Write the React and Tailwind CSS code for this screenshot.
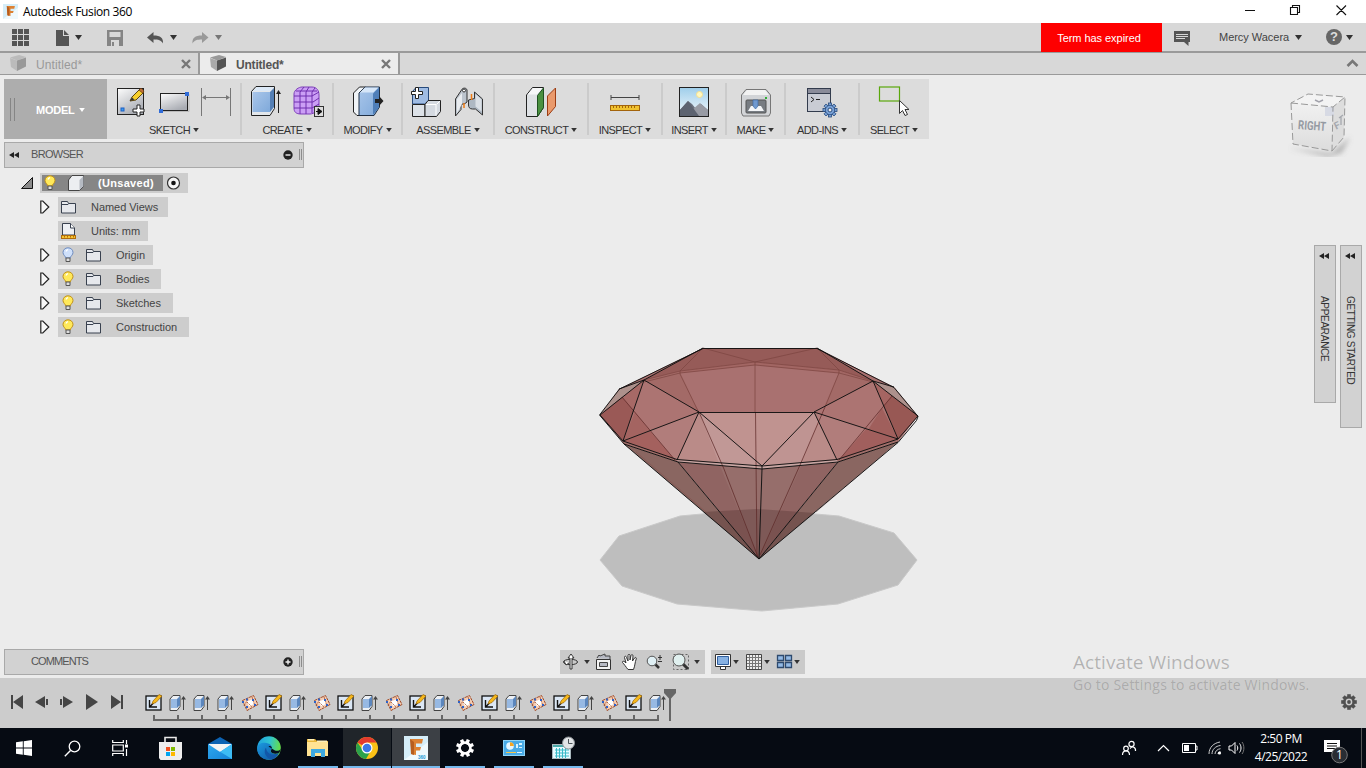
import React from "react";

const Svg = ({ w, h = w, vb, className = "", children }) => (
  <svg width={w} height={h} viewBox={vb || `0 0 ${w} ${h}`} fill="none" className={`block shrink-0 ${className}`}>
    {children}
  </svg>
);

const Caret = ({ className = "text-[#333]", small }) => (
  <Svg w={small ? 6 : 7} h={small ? 4 : 5} vb="0 0 7 5" className={className}>
    <path d="M0 0h7L3.5 5z" fill="currentColor" />
  </Svg>
);

const Defs = () => (
  <svg width="0" height="0" className="absolute">
    <defs>
      <linearGradient id="steel" x1="0" y1="0" x2="0.6" y2="1">
        <stop offset="0" stopColor="#fdfdfd" />
        <stop offset="1" stopColor="#a9acb3" />
      </linearGradient>
      <linearGradient id="blue" x1="0" y1="0" x2="1" y2="1">
        <stop offset="0" stopColor="#a9c6ea" />
        <stop offset="1" stopColor="#7fa9da" />
      </linearGradient>
      <linearGradient id="sky" x1="0" y1="0" x2="0" y2="1">
        <stop offset="0" stopColor="#9dcdea" />
        <stop offset="1" stopColor="#f4f9fc" />
      </linearGradient>
      <linearGradient id="mail" x1="0" y1="0" x2="1" y2="1">
        <stop offset="0" stopColor="#2fa8ee" />
        <stop offset="1" stopColor="#1583d8" />
      </linearGradient>
      <linearGradient id="edge" x1="0" y1="0" x2="1" y2="0.2">
        <stop offset="0" stopColor="#1e9fe0" />
        <stop offset="0.55" stopColor="#2fc3d2" />
        <stop offset="1" stopColor="#63dc4e" />
      </linearGradient>
      <linearGradient id="edgelow" x1="0" y1="0" x2="1" y2="1">
        <stop offset="0" stopColor="#1b9be0" />
        <stop offset="1" stopColor="#0f4f9e" />
      </linearGradient>
      <linearGradient id="cubeface" x1="0" y1="0" x2="0" y2="1">
        <stop offset="0" stopColor="#f1f1f1" />
        <stop offset="1" stopColor="#dcdcdc" />
      </linearGradient>
      <filter id="soft" x="-30%" y="-80%" width="160%" height="260%">
        <feGaussianBlur stdDeviation="2.5" />
      </filter>
    </defs>
  </svg>
);

/* ---------- toolbar icons ---------- */
const SketchIcon = () => (
  <Svg w={32}>
    <rect x="1.500" y="2.500" width="26" height="26" fill="url(#steel)" stroke="#222" />
    <rect x="5" y="22" width="3" height="3" fill="#3b9bf0" stroke="#1c5fc4" />
    <path d="M14 15l2-4L24 3l4 3-8 8z" fill="#f7cf2c" stroke="#5b4410" />
    <path d="M23 4l2-2 3 3-1.500 2z" fill="#c0703a" stroke="#5b3410" strokeWidth=".7" />
    <path d="M14 15l2-3.500 2.500 2z" fill="#333" />
    <path d="M21 19h3v4h4v3h-4v4h-3v-4h-4v-3h4z" fill="#fff" stroke="#222" />
  </Svg>
);
const RectIcon = () => (
  <Svg w={32}>
    <path d="M3 25.500h28V8" stroke="#bbb" />
    <rect x="2.500" y="7.500" width="27" height="17" fill="url(#steel)" stroke="#222" />
    <rect x="1" y="23" width="4" height="4" fill="#2f6bd8" />
    <rect x="27" y="6" width="4" height="4" fill="#2f6bd8" />
  </Svg>
);
const DimIcon = () => (
  <Svg w={32}>
    <path d="M1.500 2v28M30.500 2v28M3 11.500h26" stroke="#777" />
    <path d="M2 11.500l4-2.500v5zM30 11.500l-4-2.500v5z" fill="#777" />
  </Svg>
);
const ExtrudeIcon = () => (
  <Svg w={32}>
    <path d="M1.500 5.500L6 .5h18.500v22L20 29.500H1.500z" fill="#e3e7eb" stroke="#222" />
    <path d="M2.500 6H20v20H2.500z" fill="url(#blue)" />
    <path d="M3 5l4-4h16.500l-4 4z" fill="#dce9f7" />
    <path d="M20 6l4-4v19l-4 5z" fill="#547fb5" />
    <path d="M28.500 27V6" stroke="#222" />
    <path d="M28.500 4l-2.500 4h5z" fill="#222" />
  </Svg>
);
const FormIcon = () => (
  <Svg w={32}>
    <path d="M2 8c0-4 5-7 8-7h10c5 0 7 4 7 8v11c0 4-5 8-9 8H9c-5 0-7-2-7-6z" fill="#cb9ff5" stroke="#7d3fb8" />
    <path d="M2 10h18l7-4M2 16h19l6-4M2 22h18l7-4M8 6v22M14 6v22M20 6v21M8 6l4-5M14 6l3-5M20 6l3-4M4 5h21" stroke="#6f2fae" />
    <rect x="22.500" y="20.500" width="9" height="10" fill="#ddd" stroke="#333" />
    <path d="M24 25.500h3M26 22.500l4 3-4 3z" fill="#111" stroke="#111" />
  </Svg>
);
const PressPullIcon = () => (
  <Svg w={32}>
    <path d="M1.500 7l6-6h6L9 7v22.500H5L1.500 26z" fill="#f0f4f8" stroke="#222" />
    <path d="M7 7l6-6h14.500v20L22 29.500H7z" fill="url(#blue)" stroke="#1f2f44" />
    <path d="M8 6.500l5-5h13.500l-5 5z" fill="#d6e6f8" />
    <path d="M21 7.500l6-6v20L21 29z" fill="#4f7fb9" />
    <path d="M23 13h4v-3l4.500 5-4.500 5v-3h-4z" fill="#222" />
  </Svg>
);
const AssembleIcon = () => (
  <Svg w={32}>
    <path d="M1.500 5.500L5 1.500h12.500V15l-4 3h-12z" fill="#9fbce4" stroke="#274a7c" />
    <path d="M1.500 18.500H14v12H1.500z" fill="#dde2e8" stroke="#222" />
    <path d="M14 18.500l3-4h12.500v11l-4 5H14z" fill="#d5dae1" stroke="#222" />
    <path d="M15 18.500h10v11M25.500 18.500l3.500-3.500" stroke="#fff" />
    <path d="M4.500 1.500h3v4h4v3h-4v4h-3v-4h-4v-3h4z" fill="#fff" stroke="#222" />
  </Svg>
);
const JointIcon = () => (
  <Svg w={32}>
    <path d="M2.500 13l6-9c1-2.500 5-2.500 5.500 0v12l-2 1.500-4 1v5l-5.500 6.500z" fill="#bcc4cd" stroke="#333" />
    <path d="M4 13l5-6v11l-5 9z" fill="#e9ecef" />
    <circle cx="11" cy="4.500" r="1.500" fill="#fff" stroke="#333" />
    <path d="M29.500 29l-7-6h-3c-3 0-4-2-4-4v-5l6-1.500V6l8 7z" fill="#aeb8c3" stroke="#333" />
    <path d="M22.500 8l6 5.500v12l-6-5z" fill="#dbe0e6" />
    <path d="M11 17v5M18.500 8v6" stroke="#ef7c15" strokeWidth="1.500" />
  </Svg>
);
const ConstructIcon = () => (
  <Svg w={32}>
    <path d="M1.500 9l6-7.500h11v20l-6 9h-11z" fill="#dfe2e5" stroke="#222" />
    <path d="M2.500 8.500l5.500-6.500h9.500l-5.500 6.500z" fill="#f7f8f9" />
    <path d="M12.500 9.500l6-7.500v19.500l-6 9z" fill="#4a9140" stroke="#1e5220" />
    <path d="M22.500 10l8-8v18.500l-8 9.500z" fill="#ea9a6c" stroke="#9c3d14" />
  </Svg>
);
const InspectIcon = () => (
  <Svg w={32}>
    <path d="M2 11.500h28M2 9v5M30 9v5" stroke="#444" />
    <rect x="1.500" y="19.500" width="29" height="5" fill="#f0c22f" stroke="#a3640c" />
    <path d="M4.500 20v2M7.500 20v2M10.500 20v2M13.500 20v2M16.500 20v2M19.500 20v2M22.500 20v2M25.500 20v2" stroke="#a3640c" />
  </Svg>
);
const InsertIcon = () => (
  <Svg w={32}>
    <rect x="1" y="1" width="29" height="29" fill="url(#sky)" />
    <circle cx="21.500" cy="8.500" r="3" fill="#fff8c0" stroke="#f6df8c" />
    <path d="M1 25L10 15l4 3 4 5 5-5 7 6v6H1z" fill="#6d727f" />
    <path d="M14 24l8-7 8 7v6H11z" fill="#989ba4" />
    <path d="M1 25l9-10 11 15H1z" fill="#5d6370" />
    <rect x="1.500" y="1.500" width="29" height="29" stroke="#222" />
  </Svg>
);
const MakeIcon = () => (
  <Svg w={32}>
    <path d="M1.500 9L6 3.500h20L30.500 9v18l-1.500 3H3l-1.500-3z" fill="#d2d4d7" stroke="#777" />
    <path d="M3 9l4-5h18l4 5z" fill="#f2f2f2" />
    <rect x="6" y="14" width="20" height="13" rx="1" fill="#777c82" stroke="#555" />
    <path d="M8 25l3-5h10l3 5z" fill="#f3f5f7" />
    <path d="M13 14h5v6l-2.500 3-2.500-3z" fill="#6f99cf" stroke="#3f6ba5" strokeWidth=".7" />
    <rect x="25" y="11" width="2" height="2" fill="#2fae34" />
  </Svg>
);
const gearTeeth = [0, 45, 90, 135, 180, 225, 270, 315];
const AddinsIcon = () => (
  <Svg w={32}>
    <rect x="1.500" y="2.500" width="23" height="23" fill="#c9ccd4" stroke="#333c4d" />
    <rect x="2" y="3" width="22" height="4" fill="#8a8c9a" />
    <path d="M2 7.500h22" stroke="#333c4d" />
    <path d="M5 11l3 2.500L5 16M10 13.500h4" stroke="#222" />
    <g fill="#7ba3d8" stroke="#274a7c" strokeWidth=".8">
      {gearTeeth.map((a) => (
        <rect key={a} x="22.500" y="17" width="3" height="4" transform={`rotate(${a} 24 24)`} />
      ))}
      <circle cx="24" cy="24" r="4.700" />
    </g>
    <circle cx="24" cy="24" r="2" fill="#eee" stroke="#274a7c" />
  </Svg>
);
const SelectIcon = () => (
  <Svg w={32}>
    <rect x="1.500" y="1" width="20" height="14" stroke="#5aa70c" strokeWidth="1.200" />
    <path d="M21.500 14.500v13l3-3 2.500 5 2.500-1-2.500-5h4z" fill="#fff" stroke="#333" />
  </Svg>
);

const groups = [
  ["SKETCH", "w-[134px]", [SketchIcon, RectIcon, DimIcon]],
  ["CREATE", "w-[92px]", [ExtrudeIcon, FormIcon]],
  ["MODIFY", "w-[69px]", [PressPullIcon]],
  ["ASSEMBLE", "w-[92px]", [AssembleIcon, JointIcon]],
  ["CONSTRUCT", "w-[94px]", [ConstructIcon]],
  ["INSPECT", "w-[74px]", [InspectIcon]],
  ["INSERT", "w-[64px]", [InsertIcon]],
  ["MAKE", "w-[59px]", [MakeIcon]],
  ["ADD-INS", "w-[74px]", [AddinsIcon]],
  ["SELECT", "w-[70px]", [SelectIcon]],
];

const Toolbar = () => (
  <div className="mt-1 ml-1 flex h-[60px] w-[925px] bg-[#dcdcdc]">
    <div className="flex w-[103px] items-center bg-[#adadad]">
      <div className="ml-1.5 h-[23px] w-[5px] border-x border-[#858585]" />
      <div className="ml-[21px] flex items-center gap-[5px] pt-0.5 text-[11px] font-bold tracking-[-0.25px] text-white">
        MODEL <Caret small className="text-white" />
      </div>
    </div>
    {groups.map(([name, width, icons], i) => (
      <div key={name} className={`relative flex shrink-0 flex-col items-center pt-[7px] ${width}`}>
        <div className="flex gap-2.5">
          {icons.map((C, k) => (
            <C key={k} />
          ))}
        </div>
        <div className="mt-[5px] flex items-center gap-[3px] text-[11px] leading-[14px] tracking-[-0.6px] text-[#333]">
          {name} <Caret small />
        </div>
        {i < groups.length - 1 && <div className="absolute top-1 -right-px h-[52px] w-[2px] bg-[#cbcbcb]" />}
      </div>
    ))}
  </div>
);

/* ---------- browser tree ---------- */
const Bulb = ({ on }) => (
  <Svg w={12} h={16}>
    <path d="M6 .8C3 .8 1 3 1 5.500 1 8 3.500 9 3.800 11h4.400C8.500 9 11 8 11 5.500 11 3 9 .8 6 .8z" fill={on ? "#ffe95a" : "#cfe0fa"} stroke={on ? "#c09019" : "#6d8bbf"} />
    <path d="M4 4.500c.3-1 1-1.700 2-1.900" stroke="#fff" strokeWidth="1.200" />
    <path d="M4 11h4v3.500H4z" fill="#ddd" stroke="#555" />
  </Svg>
);
const Folder = () => (
  <Svg w={16} h={14}>
    <path d="M.5 13V1.500h6l1 2h7V13z" fill="#e6e8ec" stroke="#39414f" />
    <path d="M1 4.500h6l1-1" stroke="#39414f" />
  </Svg>
);
const UnitsIcon = () => (
  <Svg w={16} h={17}>
    <path d="M1.500 12V.5h8L13.500 5v7z" fill="#eef0f4" stroke="#39414f" />
    <path d="M9.500.5V5h4" stroke="#39414f" fill="#fff" />
    <rect x=".5" y="12.500" width="14" height="3" fill="#f7c531" stroke="#b06c0c" />
    <path d="M3.500 13v1.500M6.500 13v1.500M9.500 13v1.500M12.500 13v1.500" stroke="#b06c0c" />
  </Svg>
);
const Cube = () => (
  <Svg w={16} h={16}>
    <path d="M.5 5L4 .5h11.500v11l-4 4H.5z" fill="#eceef1" stroke="#444" />
    <path d="M11.500 5l4-4v10l-4 4z" fill="#b5bac2" />
  </Svg>
);
const Expand = ({ hidden }) => (
  <Svg w={10} h={14} className={hidden ? "invisible" : ""}>
    <path d="M.8 1h2l6 6-6 6h-2z" fill="#f7f7f7" stroke="#222" strokeWidth="1.200" />
  </Svg>
);

const tree = [
  ["Named Views", "w-[110px]", null, "folder"],
  ["Units: mm", "w-[90px]", null, "units"],
  ["Origin", "w-[95px]", "off", "folder"],
  ["Bodies", "w-[103px]", "on", "folder"],
  ["Sketches", "w-[115px]", "on", "folder"],
  ["Construction", "w-[131px]", "on", "folder"],
];

const Grip = () => <div className="h-[11px] w-[3px] border-x border-[#8d8d8d]" />;

const PanelBar = ({ title, sign, arrows }) => (
  <div className="ml-1 flex h-[26px] w-[300px] shrink-0 items-center border border-[#a9a9a9] bg-[#d2d2d2] pb-px text-[11px] text-[#555]">
    <Svg w={11} h={6} className={arrows ? "mt-px ml-1" : "invisible ml-1"}>
      <path d="M5 0v6L0 3zM10 0v6L5 3z" fill="#222" />
    </Svg>
    <span className={`ml-[11px] ${arrows ? "tracking-[-0.7px]" : "tracking-[-0.9px]"}`}>{title}</span>
    <Svg w={10} className="ml-auto">
      <circle cx="5" cy="5" r="4.700" fill="#222" />
      <path d={sign === "+" ? "M2.500 5h5M5 2.500v5" : "M2.500 5h5"} stroke="#eee" strokeWidth="1.400" />
    </Svg>
    <div className="ml-[6px] mr-px">
      <Grip />
    </div>
  </div>
);

const Browser = () => (
  <div className="flex w-[304px] shrink-0 flex-col pt-[3px] text-[11px] text-[#444]">
    <PanelBar title="BROWSER" sign="-" arrows />
    <div className="mt-[5px] flex h-5 items-center">
      <Svg w={12} className="ml-[21px]">
        <path d="M0.500 11.500L11.500.5v11z" fill="#8a8a8a" stroke="#111" />
      </Svg>
      <div className="ml-[7px] flex h-5 w-[148px] items-center bg-[#cdcdcd]">
        <div className="ml-0.5 flex h-4 w-[121px] items-center bg-[#868686] pl-[2px] font-bold tracking-[0.3px] text-white">
          <Bulb on />
          <div className="ml-3">
            <Cube />
          </div>
          <span className="ml-3.5">(Unsaved)</span>
        </div>
        <Svg w={14} className="ml-1">
          <circle cx="6.500" cy="7" r="6" fill="#f4f4f4" stroke="#333" strokeWidth="1.200" />
          <circle cx="6.500" cy="7" r="2.300" fill="#111" />
        </Svg>
      </div>
    </div>
    <div className="mt-1 flex flex-col gap-1 pl-10">
      {tree.map(([name, width, bulb, icon]) => (
        <div key={name} className="flex h-5 items-center gap-2">
          <Expand hidden={icon === "units"} />
          <div className={`flex h-5 items-center bg-[#cdcdcd] pl-[3px] ${width}`}>
            {bulb && (
              <div className="ml-px mr-3">
                <Bulb on={bulb === "on"} />
              </div>
            )}
            {icon === "folder" ? <Folder /> : <UnitsIcon />}
            <span className="ml-3.5 tracking-[-0.05px] whitespace-nowrap">{name}</span>
          </div>
        </div>
      ))}
    </div>
  </div>
);

/* ---------- canvas ---------- */
const Gem = () => (
  <Svg w={330} h={280} vb="595 340 330 280" className="mt-[201px] ml-[291px]">
    <polygon points="600,560 619,536 680,516 757,509 839,516 894,533 917,560 898,585 838,604 762,611 677,604 622,586" fill="#bebebe" stroke="#c9c9c9" />
    <polygon points="703,348 817,348 894,387 918,416 898,442 838,462 762,469 678,462 624,444 600,415 619,389" fill="#a97170" />
    <polygon points="703,348 817,348 873,381 839,370 755,362 680,371 644,380" fill="#965b58" />
    <polygon points="680,371 755,362 839,370 873,381 839,373 755,365 680,373 644,381" fill="#a26663" />
    <polygon points="619,389 644,380 600,415" fill="#ad918c" />
    <polygon points="894,387 873,381 918,416" fill="#ad918c" />
    <polygon points="644,380 680,372 699,412" fill="#a36a67" />
    <polygon points="873,381 839,372 824,407" fill="#a36a67" />
    <polygon points="600,415 644,380 623,441" fill="#a76966" />
    <polygon points="600,415 622,397 635,412 623,441" fill="#9a5956" />
    <polygon points="918,416 873,381 898,439" fill="#a56562" />
    <polygon points="918,416 892,396 882,408 898,439" fill="#985854" />
    <polygon points="644,380 699,412 623,441" fill="#ac7472" />
    <polygon points="635,412 650,431 623,441" fill="#a46461" />
    <polygon points="873,381 814,412 898,439" fill="#ac7472" />
    <polygon points="882,408 868,430 898,439" fill="#a05f5c" />
    <polygon points="699,412 677,460 623,441" fill="#b17d7b" />
    <polygon points="650,431 675,460 623,441" fill="#a4615e" />
    <polygon points="814,412 837,460 898,439" fill="#b17d7b" />
    <polygon points="866,429 839,460 898,439" fill="#a15f5d" />
    <polygon points="699,412 762,466 677,460" fill="#ba8b88" />
    <polygon points="699,412 762,466 719,463" fill="#c19896" />
    <polygon points="814,412 762,466 837,460" fill="#ba8b88" />
    <polygon points="814,412 762,466 801,463 818,422" fill="#bf9492" />
    <polygon points="699,412 814,412 762,466" fill="#c09390" />
    <polygon points="623,441 677,460 678,462 624,444" fill="#a06e6a" />
    <polygon points="898,439 837,460 838,462 898,442" fill="#a06e6a" />
    <polygon points="677,460 762,466 837,460 838,462 762,469 678,462" fill="#c7a5a2" />
    <polygon points="624,444 678,462 759,559" fill="#8a6661" />
    <polygon points="898,442 838,462 759,559" fill="#8a6661" />
    <polygon points="678,462 762,469 759,559" fill="#906462" />
    <polygon points="838,462 762,469 759,559" fill="#906462" />
    <polygon points="720,466 762,469 801,466 759,559" fill="#966e6b" />
    <polygon points="703,512 757,509 815,513 759,559" fill="#402020" fillOpacity=".27" />
    <g stroke="#7d4542" strokeWidth="1">
      <path d="M644 380l36-9 75-9 84 8 34 11M644 382l36-9 75-8 84 8 34 9M703 348l52 14 62-14M703 348l-23 23M817 348l22 22M680 371v3l19 39M839 370v3l-14 34M755 362v50" strokeOpacity=".75" />
      <path d="M636 452l70 60M886 452l-70 60" strokeOpacity=".35" />
    </g>
    <path d="M622 397l53 63M892 396l-53 64M699 412l25 57 34 88M825 407l-25 58-40 90M755.500 412l1.500 145" stroke="#5c2725" strokeWidth=".9" strokeOpacity=".8" />
    <g stroke="#111" strokeWidth=".95" strokeLinejoin="round">
      <path d="M703 348.500h114l77 39 24 29-1.500 4-18.500 22-139 116.500-135-115-24.500-29 20-26z" />
      <path d="M600 415l44-35 59-32M918 416l-45-35-56-33M619 389l25-9M894 387l-21-6M699 412.500h115M644 380l55 32-76 29zM873 381l-59 31 84 27zM699 412l-22 48M699 412l63 54 52-54M814 412l23 48" />
      <path d="M600 415l23 26 54 18.500 85 6.500 75-6.500 61-20.500 20-23M624 444l54 18 84 7 76-7 60-20M762 466v3l-3 90M678 462l81 97 79-97" />
    </g>
  </Svg>
);

const ViewCube = () => (
  <Svg w={66} h={66} className="mt-[16px] ml-auto mr-[12px]">
    <polygon points="0,57 43,62 62,46 54,62 40,66" fill="#777" fillOpacity=".45" filter="url(#soft)" />
    <polygon points="3,12 20,3 57,6 45,16" fill="#f3f3f3" />
    <polygon points="3,12 45,16 44,60 5,53" fill="url(#cubeface)" />
    <polygon points="45,16 57,6 56,46 44,60" fill="#dddddd" />
    <rect x="37" y="16" width="9" height="9" fill="#d7dae4" />
    <path d="M3 12l42 4 12-10-37-3zM3 12l2 41 39 7 1-44M44 60l12-14 1-40" stroke="#999" strokeDasharray="7 3" />
    <path d="M27 9l4 2 4-2" stroke="#a2a2ab" strokeWidth="1.500" />
    <text x="10" y="39" fontSize="12.500" fontWeight="bold" fontFamily="Roboto, sans-serif" fill="#959aa2" textLength="28" lengthAdjust="spacingAndGlyphs" transform="rotate(4 24 36)">RIGHT</text>
    <text x="47" y="38" fontSize="10" fontWeight="bold" fontFamily="Roboto, sans-serif" fill="#a5a8ae" transform="rotate(-25 49 36)">F</text>
    <path d="M51 27l4-3M53 26v8" stroke="#a5a8ae" strokeWidth="1.300" />
  </Svg>
);

const Dock = ({ name, size }) => (
  <div className={`flex w-[22px] flex-col items-center border border-[#a9a9a9] bg-[#d2d2d2] pr-[2px] ${size}`}>
    <Svg w={10} h={6} className="mt-[7px]">
      <path d="M5 0v6L0 3zM10 0v6L5 3z" fill="#222" />
    </Svg>
    <span className="mt-[37px] text-[10px] leading-[18px] tracking-[-0.3px] whitespace-nowrap text-[#333] [writing-mode:vertical-rl]">{name}</span>
  </div>
);

const NavBar = () => (
  <div className="mt-px ml-[256px] flex gap-[6px]">
    <div className="flex h-6 w-[145px] items-center bg-[#cacaca] pl-[3px]">
      <Svg w={18}>
        <ellipse cx="7.500" cy="9" rx="7" ry="2.700" stroke="#333" />
        <path d="M7 16V5H5L8 1l3 4H9v11zM1 8l2 4 3-2" fill="#fff" stroke="#333" />
      </Svg>
      <div className="ml-[3px]"><Caret small /></div>
      <Svg w={18} className="ml-[5px]">
        <path d="M1.500 6.500h14v10h-14z" fill="#f3f3f3" stroke="#333" />
        <path d="M4.500 9.500h8v4h-8zM2 5l2-3 1 1 5-2v2h5v3" fill="#b7bac4" stroke="#444" />
      </Svg>
      <Svg w={18} className="ml-2">
        <path d="M7 16.500C5 14 3 11 1.500 9.500 1 8 3 7.500 5 10L3.500 4.500c-.3-1.500 1.500-2 2 0L7 8V2.500c0-1.600 2-1.600 2 0V7l1-4.500c.4-1.500 2.200-1 2 .5L11.500 8l2-3c.7-1.200 2.300-.5 1.700 1C14 9 14 13 12.500 16.500z" fill="#fff" stroke="#333" />
      </Svg>
      <Svg w={19} h={18} className="ml-[7px]">
        <path d="M9 11l4 4" stroke="#333" strokeWidth="2.500" />
        <circle cx="6" cy="8" r="4.800" fill="#e0f0f5" stroke="#555" />
        <path d="M12 4.500h4M14 2v5M12 8.500h4" stroke="#333" />
      </Svg>
      <Svg w={19} h={18} className="ml-[7px]">
        <path d="M1.500 1.500h15v15h-15z" stroke="#666" strokeDasharray="2 2" />
        <path d="M11 11l5 5" stroke="#333" strokeWidth="3" />
        <circle cx="7" cy="7" r="6" fill="#e0f0ef" stroke="#555" />
      </Svg>
      <div className="ml-[3px]"><Caret small /></div>
    </div>
    <div className="flex h-6 w-[94px] items-center bg-[#cacaca] pl-[4px]">
      <Svg w={18}>
        <path d="M.5 1.500h15v12H.5z" fill="#fff" stroke="#333" />
        <path d="M2.500 3.500h11v8h-11z" fill="#87b1e2" stroke="#315f9e" />
        <path d="M5.500 14v2.500h5V14" fill="#fff" stroke="#333" />
      </Svg>
      <Caret small />
      <Svg w={18} className="ml-[6px]">
        <path d="M1.500 1.500h15v15h-15z" fill="#eee" stroke="#444" />
        <path d="M4.500 2v14M7.500 2v14M10.500 2v14M13.500 2v14M2 4.500h14M2 7.500h14M2 10.500h14M2 13.500h14" stroke="#777" />
      </Svg>
      <div className="ml-px"><Caret small /></div>
      <Svg w={18} className="ml-[6px]">
        <path d="M1.500 2.500h6v5h-6zM9.500 2.500h6v5h-6zM1.500 9.500h6v5h-6zM9.500 9.500h6v5h-6z" fill="#93bae6" stroke="#2e4a6e" strokeWidth="1.300" />
      </Svg>
      <Caret small />
    </div>
  </div>
);

/* ---------- timeline ---------- */
const TSketch = () => (
  <Svg w={18}>
    <rect x="1" y="2" width="15" height="14" fill="#dbe7f5" stroke="#111" strokeWidth="1.300" />
    <path d="M4.500 6v7H12M4.500 13l4-4" stroke="#111" strokeWidth="1.400" />
    <path d="M7 10l1-3 6-6.500 3 1.500-6 6.500z" fill="#f6b81c" stroke="#9a6508" strokeWidth=".7" />
  </Svg>
);
const TExtrude = () => (
  <Svg w={18}>
    <path d="M1 5l3-3.500h7v11l-3 4H1z" fill="#edf0f4" stroke="#444" />
    <path d="M2 5h6v9H2z" fill="#97b9e3" />
    <path d="M8 5l3-3v9l-3 3z" fill="#5b86bd" />
    <path d="M14.500 16V4" stroke="#444" />
    <path d="M14.500 2L12 5.500h5z" fill="#444" />
  </Svg>
);
const TPattern = () => (
  <Svg w={18}>
    <path d="M1.500 6.500L12.500 1.500l4.500 9L6 16.500z" fill="#f4cdb4" stroke="#a04e2c" strokeDasharray="3 .6" />
    <path d="M6 7.500l5-2 2 4.500-5 2.500z" fill="#fff" />
    <path d="M3 12l4-7M11 3l3 9M6 8l5 5" stroke="#a04e2c" strokeDasharray="2 1" strokeWidth=".8" />
    <path d="M5 4.500h2v2H5zM11 5h2v2h-2zM5 12h2v2H5zM1 7h2v2H1zM13 10h2v2h-2z" fill="#2d63c9" />
  </Svg>
);
const steps = "SEEEPSEPSEPSEPSEPSEPSE".split("");
const stepIcon = { S: TSketch, E: TExtrude, P: TPattern };

const Timeline = () => (
  <div className="flex h-[50px] shrink-0 items-start bg-[#cccccc]">
    <div className="flex w-[142px] shrink-0 items-center pt-4 pl-[11px] text-[#454545]">
      <Svg w={112} h={16}>
        <g fill="currentColor">
          <path d="M0 1h2v14H0zM12 1v14L2 8z" />
          <path d="M34 2v12L24 8zM35 5h2v6h-2z" />
          <path d="M49 5h2v6h-2zM52 2v12l10-6z" />
          <path d="M75 0v16l12-8z" />
          <path d="M100 1v14l10-7zM110 1h2v14h-2z" />
        </g>
      </Svg>
    </div>
    <div className="flex">
      {steps.map((s, i) => {
        const C = stepIcon[s];
        return (
          <div key={i} className="flex w-6 flex-col items-center pt-4">
            <C />
            <div className="mt-[3px] h-1 w-[2px] bg-[#666]" />
            <div className={`h-[2px] bg-[#666] ${i === 0 ? "w-[13px] self-end" : i === 21 ? "w-[13px] self-start" : "w-6"}`} />
          </div>
        );
      })}
    </div>
    <Svg w={12} h={32} className="-ml-[6px] mt-[11px]">
      <path d="M0 0h12v4L7 9.500V32H5V9.500L0 4z" fill="#666" />
    </Svg>
    <Svg w={16} className="ml-auto mr-[9px] mt-4">
      <g fill="#505050">
        {gearTeeth.map((a) => (
          <rect key={a} x="6.200" y="0.200" width="3.600" height="4" transform={`rotate(${a} 8 8)`} />
        ))}
      </g>
      <circle cx="8" cy="8" r="4.700" stroke="#505050" strokeWidth="2.600" />
      <circle cx="8" cy="8" r="1.900" fill="#505050" />
    </Svg>
  </div>
);

/* ---------- taskbar ---------- */
const FusionLogo = ({ size, badge }) => (
  <Svg w={size} vb="0 0 24 24">
    <rect width="24" height="24" fill="#d5edf8" />
    <path d="M0 24L24 6v18z" fill="#eff9fd" />
    <path d="M6 3h13l-1 4.500h-6v3.500h5l-1 3.500h-4v4.500l-5-1V7z" fill="#dd8132" />
    <path d="M6 3l4 3v13l-3-1z" fill="#b75d1e" />
    {badge && <text x="14" y="22.500" fontSize="4.500" fontWeight="bold" fontFamily="Liberation Sans, sans-serif" fill="#1597d4">360</text>}
  </Svg>
);
const Store = () => (
  <Svg w={24}>
    <path d="M6 6V1.500h11V6" stroke="#e8e8e8" strokeWidth="1.600" />
    <path d="M0 6h23v15.500L21.500 24h-20L0 22z" fill="#eeeeee" />
    <path d="M7 11h4v4H7z" fill="#f25022" /><path d="M12 11h4v4h-4z" fill="#7fba00" />
    <path d="M7 16h4v4H7z" fill="#00a4ef" /><path d="M12 16h4v4h-4z" fill="#ffb900" />
  </Svg>
);
const Mail = () => (
  <Svg w={24}>
    <path d="M0 8l12-7 12 7v2H0z" fill="#0d63b3" />
    <path d="M1 8h22v9H1z" fill="#f4f4f4" />
    <path d="M0 8l12 8 12-8v15H0z" fill="url(#mail)" />
    <path d="M24 8v15L10 14.500l2 1.500z" fill="#3dbcf5" />
  </Svg>
);
const Edge = () => (
  <Svg w={24}>
    <circle cx="12" cy="12" r="11.800" fill="url(#edge)" />
    <path d="M.3 13C.5 8 4.500 6.500 8 6.800c5 .3 7.500 3.200 6.700 6-.7 1.300-2 2.700 0 4 2 1.200 5 1.200 7.300-.3C20 21 17 23.800 12 23.800 5 23.800 0 18.500.3 13z" fill="url(#edgelow)" />
    <path d="M9 11.500c-3 4-.5 10.500 5.500 12 3-.7 5.700-2.700 7.300-6-5.500 3-12 1-12.800-6z" fill="#1257a8" />
    <path d="M11.500 10.500c2-1.500 4 .5 3.200 2.300-.6 1.300-1.500 2.500-.2 3.700 2 1.700 6 1.300 8 0l1.500-4c-1 2.500-4 2.500-6 2z" fill="#07111e" />
  </Svg>
);
const Explorer = () => (
  <Svg w={24}>
    <path d="M1 3h8l2 2h11v14H1z" fill="#e8b73a" />
    <path d="M1 6h21v14H1z" fill="#ffe393" />
    <path d="M2 3h6v1.500H2zM11 4.500h10V6H11z" fill="#fff0b8" />
    <path d="M5 21v-8h14v8h-4v-4H9v4z" fill="#3ea9e0" />
  </Svg>
);
const Chrome = () => (
  <Svg w={24}>
    <circle cx="12" cy="12" r="11" fill="#fbc116" />
    <path d="M12 12L2.500 6.500A11 11 0 0 1 21.500 6.500H12z" fill="#e33b2e" />
    <path d="M2.500 6.500A11 11 0 0 0 11 23l5-8.500-8 0z" fill="#2ba24c" />
    <circle cx="12" cy="12" r="5.500" fill="#fff" /><circle cx="12" cy="12" r="4.300" fill="#3b78e7" />
  </Svg>
);
const Settings = () => (
  <Svg w={24}>
    <g fill="#fff">
      {gearTeeth.map((a) => (
        <rect key={a} x="10.300" y="3" width="3.400" height="5" transform={`rotate(${a + 22} 12 12)`} />
      ))}
    </g>
    <circle cx="12" cy="12" r="5.500" stroke="#fff" strokeWidth="2.500" />
  </Svg>
);
const ControlPanel = () => (
  <Svg w={24}>
    <rect x="1.500" y="4.500" width="21" height="15" fill="#49abe6" stroke="#8ed4f7" />
    <circle cx="8" cy="10" r="3.800" fill="#e5f7ff" />
    <path d="M8 10V6.200A3.800 3.800 0 0 1 11.800 10z" fill="#f5a623" />
    <path d="M14 8h2v4h-2zM17 7h3v2h-3zM17 11h3v1h-3z" fill="#d8f3ff" />
    <path d="M4 16.500h10" stroke="#f4c64d" /><path d="M15 16.500h5" stroke="#e0f4ff" />
  </Svg>
);
const Scheduler = () => (
  <Svg w={26} h={24}>
    <rect x="2.500" y="8.500" width="18" height="14" fill="#e6faff" stroke="#a9b8bd" />
    <path d="M3 10h17" stroke="#48a8a8" strokeWidth="2" />
    <path d="M5 14h14M5 17h14M5 20h14M6.500 12v10M9.500 12v10M12.500 12v10M15.500 12v10" stroke="#3abac8" />
    <circle cx="18.500" cy="7" r="6" fill="#e2e5e7" stroke="#8c9296" />
    <path d="M18.500 3v4.500h4" stroke="#4a5257" />
  </Svg>
);
const apps = [
  [Store, ""],
  [Mail, ""],
  [Edge, ""],
  [Explorer, "w-10"],
  [Chrome, "w-12", "bg-[#20252a]"],
  [() => <FusionLogo size={24} badge />, "w-12", "bg-[#3c4045]"],
  [Settings, "w-10"],
  [ControlPanel, "w-10"],
  [Scheduler, "w-10"],
];

const Taskbar = () => (
  <div className="flex h-10 shrink-0 bg-[#060b13] text-white">
    <div className="flex w-12 items-center justify-center">
      <Svg w={16}>
        <path d="M0 2.300l6.800-1v6.300H0zM7.700 1.200L16 0v7.600H7.700zM0 8.500h6.800v6.300l-6.800-1zM7.700 8.500H16V16l-8.300-1.200z" fill="#fff" />
      </Svg>
    </div>
    <div className="flex w-12 items-center justify-center">
      <Svg w={17}>
        <circle cx="10.500" cy="6.500" r="5.300" stroke="#fff" strokeWidth="1.300" />
        <path d="M6.500 10.500L.8 16.200" stroke="#fff" strokeWidth="1.400" />
      </Svg>
    </div>
    <div className="mr-[3px] flex w-12 items-center justify-center">
      <Svg w={17} h={16}>
        <path d="M.7 0v2.500h10.600V0M.7 16v-2.500h10.600V16M.7 5h10.600v6H.7zM14.500 0v4M14.500 9v7" stroke="#fff" strokeWidth="1.200" />
        <path d="M13 4.500h3v3h-3z" fill="#fff" />
      </Svg>
    </div>
    <div className="flex gap-px">
      {apps.map(([C, line, bg], i) => (
        <div key={i} className={`flex h-10 w-12 flex-col items-center pt-2 ${bg || ""}`}>
          <C />
          <div className={`mt-auto h-[2px] shrink-0 bg-[#76b9ed] ${line}`} />
        </div>
      ))}
    </div>
    <div className="ml-auto flex items-center">
      <Svg w={16} className="mr-5">
        <circle cx="10.500" cy="4" r="2.600" stroke="#fff" strokeWidth="1.200" />
        <circle cx="5" cy="8.500" r="2.300" stroke="#fff" strokeWidth="1.200" />
        <path d="M1.500 15c0-5.500 7-5.500 7 0M9 8.500c2.500-3 6-1 5.500 2.500" stroke="#fff" strokeWidth="1.200" />
      </Svg>
      <Svg w={13} h={8} className="mr-3">
        <path d="M1 7l5.500-5.500L12 7" stroke="#fff" strokeWidth="1.200" />
      </Svg>
      <Svg w={16} h={10} className="mr-2.5">
        <path d="M.5.5h13v9H.5zM14 3h1v4h-1" stroke="#fff" />
        <path d="M2 2h5v6H2z" fill="#fff" />
      </Svg>
      <Svg w={14} className="mr-1.5">
        <path d="M1 13C1 6 6 2 12 1M4 13c0-4.500 3.500-8 8.500-8.500M7 13c0-2.700 2.500-5 5.500-5.300M10 13c0-1.500 1-2 2.500-2.200" stroke="#ccc" />
        <circle cx="11.500" cy="12" r="1.600" fill="#fff" />
      </Svg>
      <Svg w={17} h={14} className="mr-[8px]">
        <path d="M1 5h2.500L7 1.500v11L3.500 9H1z" stroke="#fff" />
        <path d="M9 4.500c1 1.500 1 3.500 0 5M11.500 2.500c2 2.500 2 6.500 0 9" stroke="#fff" />
        <path d="M14 1c2.500 3 2.500 9 0 12" stroke="#777" />
      </Svg>
      <div className="w-[56px] text-center font-['Open_Sans',sans-serif] text-[12px] leading-[18px] tracking-[-0.5px] whitespace-nowrap">
        <div>2:50 PM</div>
        <div>4/25/2022</div>
      </div>
      <div className="relative ml-[15px] h-10 w-[37px]">
        <Svg w={25} h={26} className="mt-3">
          <path d="M0 0h16v12h-5l-3 3v-3H0z" fill="#fff" />
          <path d="M3 3.500h10M3 6h10M3 8.500h8" stroke="#111" />
          <circle cx="15.500" cy="15" r="7.800" fill="#292d33" stroke="#777" />
        </Svg>
        <span className="absolute top-[19px] left-3 font-['Open_Sans',sans-serif] text-[12px] leading-4">1</span>
      </div>
      <div className="h-10 w-[5px] border-l border-[#555]" />
    </div>
  </div>
);

/* ---------- window chrome ---------- */
const TitleBar = () => (
  <div className="flex h-[23px] shrink-0 items-center bg-white">
    <div className="ml-[3px]"><FusionLogo size={15} /></div>
    <span className="ml-[5px] font-['Open_Sans',sans-serif] text-[12px] tracking-[-0.38px] text-black">Autodesk Fusion 360</span>
    <Svg w={103} h={12} className="mt-[-3px] mr-[19px] ml-auto">
      <path d="M1 6.500h10M46.500 3.500h7v7h-7zM48.500 3V1.500h7v7H54M92.500 1.500l9.500 9.500M102 1.500L92.500 11" stroke="#111" strokeWidth="1.100" />
    </Svg>
  </div>
);

const AppBar = () => (
  <div className="flex h-[30px] shrink-0 items-center border-b-2 border-[#9a9a9a] bg-[#d8d8d8]">
    <Svg w={17} className="ml-3">
      <path d="M0 0h5v5H0zM6 0h5v5H6zM12 0h5v5h-5zM0 6h5v5H0zM6 6h5v5H6zM12 6h5v5h-5zM0 12h5v5H0zM6 12h5v5H6zM12 12h5v5h-5z" fill="#555" />
    </Svg>
    <Svg w={14} h={16} className="mt-px ml-[27px]">
      <path d="M0 0h7v6h6v10H0zM8 0l5 5H8z" fill="#555" />
    </Svg>
    <div className="ml-[5px]"><Caret /></div>
    <Svg w={16} className="mt-px ml-[25px]">
      <path d="M0 0h16v16H0z" fill="#858585" />
      <path d="M2.500 2h11v5h-11zM4 10h8v6H4z" fill="#d8d8d8" />
      <path d="M5 12h2v4H5z" fill="#858585" />
    </Svg>
    <Svg w={17} h={12} className="mt-px ml-6">
      <path d="M6.500 0v3.500c7 0 10 2.500 9.500 8-2-3.500-4.500-4-9.500-4V11L0 5.500z" fill="#555" />
    </Svg>
    <div className="ml-1.5"><Caret /></div>
    <Svg w={17} h={12} className="mt-px ml-[15px]">
      <path d="M10 0v3.500C3 3.500 0 6 .5 11.500c2-3.500 4.500-4 9.500-4V11l6.500-5.500z" fill="#999" />
    </Svg>
    <div className="ml-1.5"><Caret className="text-[#777]" /></div>
    <div className="ml-auto flex h-[29px] w-[121px] items-center justify-center self-start bg-[#fe0000] pt-px pr-[5px] text-[11px] tracking-[-0.05px] text-white">Term has expired</div>
    <Svg w={16} className="mt-px ml-[12px]">
      <path d="M0 1h16v11h-1.500v4L10 12H0z" fill="#555" />
      <path d="M2 4.500h12M2 6.500h12M2 8.500h9" stroke="#d8d8d8" />
    </Svg>
    <span className="ml-[29px] w-[70px] pt-px text-[11px] tracking-[-0.03px] whitespace-nowrap text-[#444]">Mercy Wacera</span>
    <div className="ml-[6px]"><Caret /></div>
    <div className="ml-6 flex size-4 items-center justify-center rounded-full bg-[#666] text-[13px] leading-4 font-bold text-[#ddd]">?</div>
    <div className="mr-[13px] ml-1"><Caret /></div>
  </div>
);

const Tab = ({ active }) => (
  <div className={`flex w-[200px] items-center border-r-2 border-[#9a9a9a] ${active ? "bg-[#ececec] text-[#555]" : "bg-[#d6d6d6] text-[#999]"}`}>
    <Svg w={17} h={16} className="-mt-0.5 ml-2.5">
      <path d="M0 2.500L9 0l7 2-9 3.500z" fill={active ? "#999" : "#bbb"} />
      <path d="M0 3l7 2.500V16L1 12z" fill={active ? "#aaa" : "#bbb"} />
      <path d="M7 5.500L16 2.500v9L7 16z" fill={active ? "#555" : "#999"} />
    </Svg>
    <span className={`ml-[9px] pt-[3px] text-[12px] ${active ? "font-bold tracking-[-0.2px]" : "tracking-[0.1px]"}`}>Untitled*</span>
    <Svg w={10} className="ml-auto mr-[7px]">
      <path d="M1 1l8 8M9 1L1 9" stroke="#777" strokeWidth="2.400" />
    </Svg>
  </div>
);

export default function App() {
  return (
    <div className="relative flex h-[768px] w-[1366px] flex-col overflow-hidden bg-[#ececec] font-['Liberation_Sans',Arial,sans-serif]">
      <Defs />
      <TitleBar />
      <AppBar />
      <div className="flex h-[22px] shrink-0 border-b border-[#9a9a9a] bg-[#d8d8d8]">
        <Tab />
        <Tab active />
        <Svg w={13} h={8} className="mt-1.5 mr-[7px] ml-auto">
          <path d="M1.500 7l5-5 5 5" stroke="#777" strokeWidth="2.600" />
        </Svg>
      </div>
      <main className="flex min-h-0 flex-1 flex-col">
        <div className="flex h-16 shrink-0 items-start">
          <Toolbar />
          <ViewCube />
        </div>
        <div className="flex h-[510px] shrink-0">
          <Browser />
          <Gem />
          <div className="mt-[106px] mr-1 ml-auto flex items-start gap-1">
            <Dock name="APPEARANCE" size="h-[158px]" />
            <Dock name="GETTING STARTED" size="h-[183px]" />
          </div>
        </div>
        <div className="flex items-start">
          <PanelBar title="COMMENTS" sign="+" />
          <NavBar />
        </div>
      </main>
      <Timeline />
      <Taskbar />
      <div className="absolute top-[650px] left-[1073px] font-['Open_Sans',sans-serif] whitespace-nowrap text-black/25">
        <div className="text-[19px] leading-6 tracking-[0.05px]">Activate Windows</div>
        <div className="text-[14px] leading-[22px] tracking-[0.2px] text-black/18">Go to Settings to activate Windows.</div>
      </div>
    </div>
  );
}
